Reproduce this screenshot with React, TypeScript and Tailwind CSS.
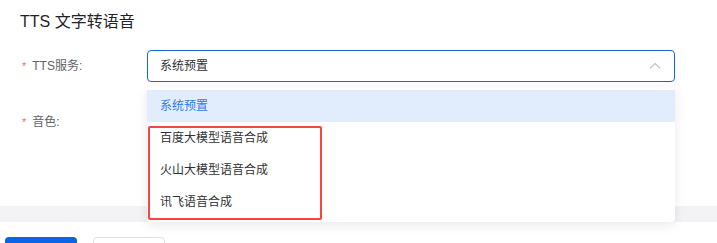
import React from "react";

const font = { fontFamily: '"Liberation Sans", "Noto Sans CJK SC", sans-serif' };

export default function App() {
  const items = ["系统预置", "百度大模型语音合成", "火山大模型语音合成", "讯飞语音合成"];
  return (
    <div className="w-[717px] h-[243px] overflow-hidden bg-white relative" style={font}>
      <div className="bg-white h-[206px] px-5 pt-[10px] rounded-b-[4px]">
        <div className="text-[16px] leading-[24px] text-[#1f2329] font-normal">TTS 文字转语音</div>
        <div className="mt-4 pr-[22px] flex flex-col gap-6">
          <div className="flex items-center h-8">
            <div className="w-[127px] flex items-center text-[12px] text-[#606266] pl-[2px]">
              <span className="text-[#f56c6c] mr-[6px] text-[11px]">*</span>
              <span>TTS服务:</span>
            </div>
            <div className="relative flex-1">
              <div className="h-8 border border-[#1565e0] rounded-[4px] flex items-center justify-between pl-[12px] pr-[13px]">
                <span className="text-[12px] text-[#303133]">系统预置</span>
                <svg width="12" height="8" viewBox="0 0 12 8" fill="none">
                  <path d="M1 6.5 L6 1.5 L11 6.5" stroke="#c4c7cc" strokeWidth="1.3" />
                </svg>
              </div>
              <div className="absolute left-0 right-0 top-[36px] z-10 bg-white rounded-[4px] shadow-[0_3px_12px_rgba(0,0,0,0.09)] py-1">
                {items.map((t, i) => (
                  <div
                    key={t}
                    className={
                      "h-8 flex items-center pl-[13px] text-[12px] " +
                      (i === 0 ? "bg-[#e1edfc] text-[#2f7be8]" : "text-[#303133]")
                    }
                  >
                    {t}
                  </div>
                ))}
                <div className="absolute left-[1px] top-[40px] w-[174px] h-[94px] border-[2.5px] border-[#f5473f] rounded-[2px]" />
              </div>
            </div>
          </div>
          <div className="flex items-center h-8">
            <div className="w-[127px] flex items-center text-[12px] text-[#606266] pl-[2px]">
              <span className="text-[#f56c6c] mr-[6px] text-[11px]">*</span>
              <span>音色:</span>
            </div>
            <div className="flex-1" />
          </div>
        </div>
      </div>
      <div className="h-4 bg-[#f3f3f5]" />
      <div className="bg-white pt-[15px] flex gap-4 pl-[5px]">
        <div className="w-[72px] h-8 bg-[#0b63e5] rounded-[4px]" />
        <div className="w-[72px] h-8 bg-white border border-[#dcdfe6] rounded-[4px]" />
      </div>
    </div>
  );
}
